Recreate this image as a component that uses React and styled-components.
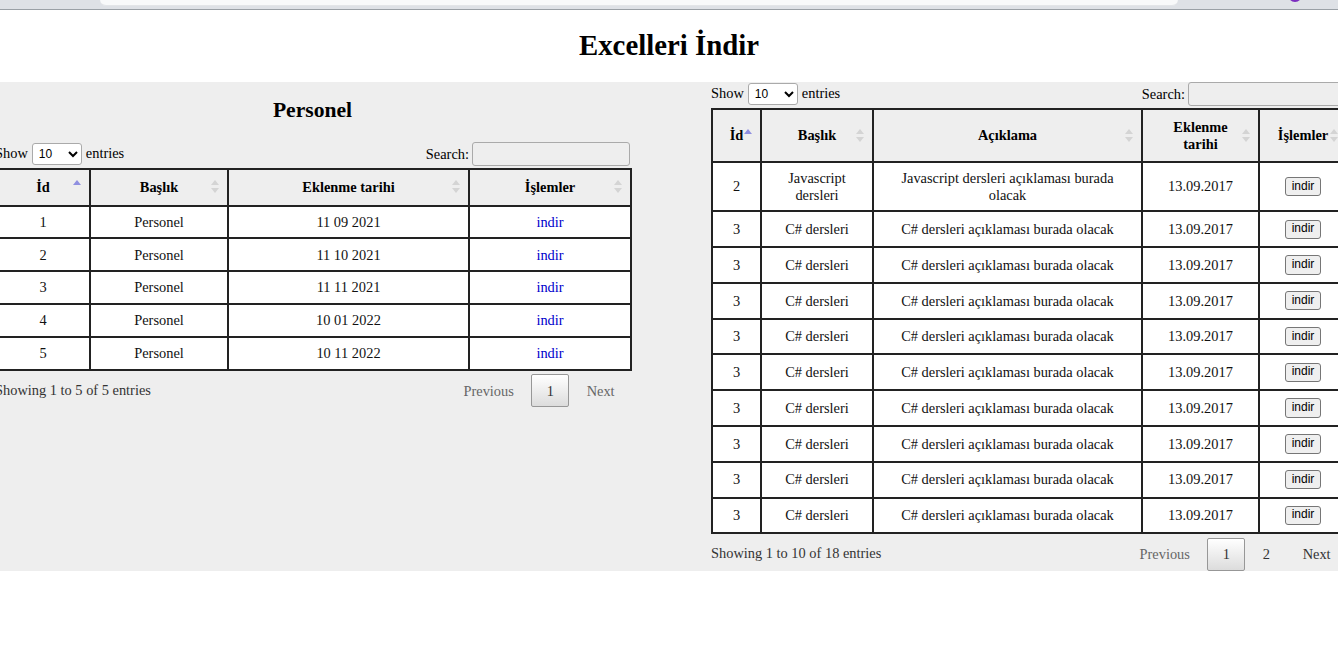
import styled, { createGlobalStyle } from 'styled-components';

const GlobalStyle = createGlobalStyle`
    html, body {
        margin: 0;
        padding: 0;
        background: #fff;
        overflow: hidden;
    }
    body {
        font-family: "Liberation Serif", "Times New Roman", serif;
        font-size: 14.4px;
        color: #000;
    }
`;

const BrowserBar = styled.div`
    display: flex;
    height: 9px;
    background: #dee1e6;
    border-bottom: 1px solid #9aa0a6;
    overflow: hidden;
`;

const AddressField = styled.div`
    margin-left: 100px;
    width: 1078px;
    height: 5px;
    background: #f8f9fa;
    border-bottom: 1px solid #e3e5e8;
    border-radius: 0 0 14px 14px;
`;

const ProfileDot = styled.div`
    margin: -12px 36px 0 auto;
    width: 14px;
    height: 14px;
    border-radius: 50%;
    background: #7b2cbf;
`;

const Title = styled.h1`
    margin: 19px 0 20px;
    text-align: center;
    font-size: 28.8px;
    line-height: 33px;
    font-weight: bold;
`;

const Section = styled.section`
    background: #eee;
    overflow: hidden;
`;

const Columns = styled.div`
    display: grid;
    grid-template-columns: 635px 635px;
    column-gap: 81px;
    align-items: start;
    margin-left: -5px;
`;

const Panel = styled.div`
    display: flex;
    flex-direction: column;
`;

const PanelTitle = styled.h2`
    margin: 16px 0 19px;
    text-align: center;
    font-size: 21.6px;
    line-height: 25px;
    font-weight: bold;
`;

const Controls = styled.div`
    display: flex;
    justify-content: space-between;
    align-items: center;
    height: 24px;
    margin-bottom: 2px;
    line-height: 16.5px;
`;

const Select = styled.select`
    width: 50px;
    height: 22px;
    margin: 0 4px;
    padding: 0 2px;
    font-family: "Liberation Sans", Arial, sans-serif;
    font-size: 12px;
    color: #000;
    background: #fff;
    border: 1px solid #aaa;
    border-radius: 3px;
`;

const SearchInput = styled.input`
    box-sizing: border-box;
    width: 158px;
    height: 24px;
    margin-left: 3px;
    padding: 4px;
    background: transparent;
    border: 1px solid #aaa;
    border-radius: 3px;
`;

const Table = styled.table`
    width: 100%;
    table-layout: fixed;
    border-collapse: collapse;
    border: 2px solid #222;
`;

const Th = styled.th`
    position: relative;
    padding: 9px 16px;
    border: 2px solid #222;
    text-align: center;
    font-weight: bold;
    line-height: 16.5px;

    &::before,
    &::after {
        content: '';
        position: absolute;
        right: 8px;
        width: 0;
        height: 0;
        border-left: 4px solid transparent;
        border-right: 4px solid transparent;
    }
    &::before {
        top: calc(50% - 7px);
        border-bottom: 5px solid ${(p) => (p.$asc ? '#8f8fe0' : '#d4d4d4')};
    }
    &::after {
        top: calc(50% + 1px);
        border-top: 5px solid ${(p) => (p.$asc ? 'transparent' : '#d4d4d4')};
    }
`;

const Td = styled.td`
    padding: 7.2px 9px;
    border: 2px solid #222;
    background: #fff;
    text-align: center;
    vertical-align: middle;
    line-height: 16.5px;
    color: #111;
`;

const DownloadLink = styled.a`
    color: #0000cc;
    text-decoration: none;
`;

const DownloadButton = styled.button`
    display: inline-block;
    vertical-align: middle;
    padding: 1.8px 6px;
    font-family: "Liberation Sans", Arial, sans-serif;
    font-size: 12px;
    line-height: 13.8px;
    color: #000;
    background: #efefef;
    border: 1px solid #767676;
    border-radius: 3px;
`;

const Footer = styled.div`
    display: flex;
    justify-content: space-between;
    align-items: flex-start;
    line-height: 16.5px;
`;

const Info = styled.div`
    padding-top: 11px;
    color: #333;
`;

const Pager = styled.div`
    display: flex;
    padding-top: 3.6px;
`;

const PageButton = styled.span`
    margin-left: 2px;
    padding: 7.2px 14.4px;
    border: 1px solid ${(p) => (p.$current ? '#979797' : 'transparent')};
    border-radius: 2px;
    color: ${(p) => (p.$disabled ? '#666' : '#333')};
    background: ${(p) =>
        p.$current ? 'linear-gradient(to bottom, #fff 0%, #dcdcdc 100%)' : 'transparent'};
`;

const personelRows = [
    { id: 1, title: 'Personel', date: '11 09 2021' },
    { id: 2, title: 'Personel', date: '11 10 2021' },
    { id: 3, title: 'Personel', date: '11 11 2021' },
    { id: 4, title: 'Personel', date: '10 01 2022' },
    { id: 5, title: 'Personel', date: '10 11 2022' },
];

const courseRows = [
    {
        id: 2,
        title: 'Javascript dersleri',
        text: 'Javascript dersleri açıklaması burada olacak',
        date: '13.09.2017',
    },
    ...Array.from({ length: 9 }, () => ({
        id: 3,
        title: 'C# dersleri',
        text: 'C# dersleri açıklaması burada olacak',
        date: '13.09.2017',
    })),
];

function TableControls() {
    return (
        <Controls>
            <label>
                Show
                <Select defaultValue="10">
                    <option value="10">10</option>
                    <option value="25">25</option>
                    <option value="50">50</option>
                </Select>
                entries
            </label>
            <label>
                Search:
                <SearchInput type="search" />
            </label>
        </Controls>
    );
}

function TableFooter({ info, pages }) {
    return (
        <Footer>
            <Info>{info}</Info>
            <Pager>
                <PageButton $disabled>Previous</PageButton>
                {pages.map((n) => (
                    <PageButton key={n} $current={n === 1}>
                        {n}
                    </PageButton>
                ))}
                <PageButton $disabled={pages.length === 1}>Next</PageButton>
            </Pager>
        </Footer>
    );
}

export default function App() {
    return (
        <>
            <GlobalStyle />
            <BrowserBar>
                <AddressField />
                <ProfileDot />
            </BrowserBar>
            <Title>Excelleri İndir</Title>
            <Section>
                <Columns>
                    <Panel>
                        <PanelTitle>Personel</PanelTitle>
                        <TableControls />
                        <Table>
                            <colgroup>
                                <col style={{ width: 94 }} />
                                <col style={{ width: 138 }} />
                                <col style={{ width: 241 }} />
                                <col style={{ width: 162 }} />
                            </colgroup>
                            <thead>
                                <tr>
                                    <Th $asc>İd</Th>
                                    <Th>Başlık</Th>
                                    <Th>Eklenme tarihi</Th>
                                    <Th>İşlemler</Th>
                                </tr>
                            </thead>
                            <tbody>
                                {personelRows.map((row) => (
                                    <tr key={row.id}>
                                        <Td>{row.id}</Td>
                                        <Td>{row.title}</Td>
                                        <Td>{row.date}</Td>
                                        <Td>
                                            <DownloadLink href="#">indir</DownloadLink>
                                        </Td>
                                    </tr>
                                ))}
                            </tbody>
                        </Table>
                        <TableFooter info="Showing 1 to 5 of 5 entries" pages={[1]} />
                    </Panel>

                    <Panel>
                        <TableControls />
                        <Table>
                            <colgroup>
                                <col style={{ width: 49 }} />
                                <col style={{ width: 112 }} />
                                <col style={{ width: 269 }} />
                                <col style={{ width: 117 }} />
                                <col style={{ width: 88 }} />
                            </colgroup>
                            <thead>
                                <tr>
                                    <Th $asc>İd</Th>
                                    <Th>Başlık</Th>
                                    <Th>Açıklama</Th>
                                    <Th>Eklenme tarihi</Th>
                                    <Th>İşlemler</Th>
                                </tr>
                            </thead>
                            <tbody>
                                {courseRows.map((row, i) => (
                                    <tr key={i}>
                                        <Td>{row.id}</Td>
                                        <Td>{row.title}</Td>
                                        <Td>{row.text}</Td>
                                        <Td>{row.date}</Td>
                                        <Td>
                                            <DownloadButton>indir</DownloadButton>
                                        </Td>
                                    </tr>
                                ))}
                            </tbody>
                        </Table>
                        <TableFooter info="Showing 1 to 10 of 18 entries" pages={[1, 2]} />
                    </Panel>
                </Columns>
            </Section>
        </>
    );
}
